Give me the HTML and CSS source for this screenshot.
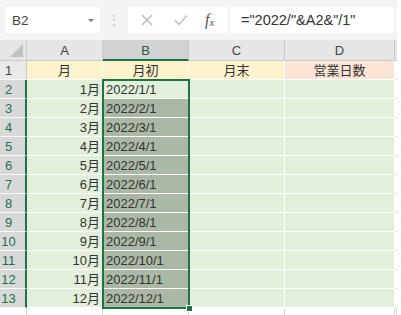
FILE: index.html
```html
<!DOCTYPE html>
<html lang="ja">
<head>
    <meta charset="UTF-8">
    <title>Sheet</title>
    <link rel="stylesheet" href="styles.css">
</head>
<body>
    <div class="excel">
        <div class="bar">
            <div class="name-box"><span>B2</span><span class="caret"></span></div>
            <div class="grip">⋮</div>
            <div class="fx-box">
                <svg class="btn-x" width="12" height="12" viewBox="0 0 12 12"><path d="M1 1L11 11M11 1L1 11" stroke="#b4b4b4" stroke-width="1.2" fill="none"/></svg>
                <svg class="btn-ok" width="14" height="12" viewBox="0 0 14 12"><path d="M1 6.5L5 10.5L13 1.5" stroke="#b4b4b4" stroke-width="1.2" fill="none"/></svg>
                <span class="fx">f<sub>x</sub></span>
            </div>
            <div class="formula">="2022/"&amp;A2&amp;"/1"</div>
        </div>

        <div class="sheet">
            <div class="grid">
                <div class="corner"><span class="tri"></span></div>
                <div class="ch">A</div>
                <div class="ch on">B</div>
                <div class="ch">C</div>
                <div class="ch">D</div>
                <div class="ch edge"></div>

                <div class="rh">1</div>
                <div class="c yel mid">月</div>
                <div class="c yel mid">月初</div>
                <div class="c yel mid">月末</div>
                <div class="c org mid">営業日数</div>
                <div class="e"></div>

                <div class="rh on">2</div><div class="c num">1月</div><div class="c">2022/1/1</div><div class="c"></div><div class="c"></div><div class="e"></div>
                <div class="rh on">3</div><div class="c num">2月</div><div class="c sel">2022/2/1</div><div class="c"></div><div class="c"></div><div class="e"></div>
                <div class="rh on">4</div><div class="c num">3月</div><div class="c sel">2022/3/1</div><div class="c"></div><div class="c"></div><div class="e"></div>
                <div class="rh on">5</div><div class="c num">4月</div><div class="c sel">2022/4/1</div><div class="c"></div><div class="c"></div><div class="e"></div>
                <div class="rh on">6</div><div class="c num">5月</div><div class="c sel">2022/5/1</div><div class="c"></div><div class="c"></div><div class="e"></div>
                <div class="rh on">7</div><div class="c num">6月</div><div class="c sel">2022/6/1</div><div class="c"></div><div class="c"></div><div class="e"></div>
                <div class="rh on">8</div><div class="c num">7月</div><div class="c sel">2022/7/1</div><div class="c"></div><div class="c"></div><div class="e"></div>
                <div class="rh on">9</div><div class="c num">8月</div><div class="c sel">2022/8/1</div><div class="c"></div><div class="c"></div><div class="e"></div>
                <div class="rh on">10</div><div class="c num">9月</div><div class="c sel">2022/9/1</div><div class="c"></div><div class="c"></div><div class="e"></div>
                <div class="rh on">11</div><div class="c num">10月</div><div class="c sel">2022/10/1</div><div class="c"></div><div class="c"></div><div class="e"></div>
                <div class="rh on">12</div><div class="c num">11月</div><div class="c sel">2022/11/1</div><div class="c"></div><div class="c"></div><div class="e"></div>
                <div class="rh on">13</div><div class="c num">12月</div><div class="c sel">2022/12/1</div><div class="c"></div><div class="c"></div><div class="e"></div>

                <div class="tail"></div><div class="tail"></div><div class="tail"></div><div class="tail"></div><div class="tail"></div><div class="tail"></div>
            </div>
            <!-- selection B2:B13 -->
            <div class="range"><span class="handle"></span></div>
        </div>
    </div>
</body>
</html>
```

FILE: styles.css
```css
*{
    margin: 0;
    padding: 0;
    box-sizing: border-box;
}
body{
    background: #fff;
    font-family: "Liberation Sans", "Noto Sans CJK JP", sans-serif;
    color: #333;
}
.excel{
    width: 397px;
}
.bar{
    height: 40px;
    background: #f3f3f3;
    display: flex;
    align-items: flex-start;
    padding: 7px 3px 0 5px;
}
.name-box{
    width: 95px;
    height: 26px;
    background: #fff;
    display: flex;
    align-items: center;
    justify-content: space-between;
    padding: 0 6px 0 7px;
    font-size: 13.5px;
    color: #444;
}
.caret{
    width: 0;
    height: 0;
    border-left: 3px solid transparent;
    border-right: 3px solid transparent;
    border-top: 3px solid #777;
}
.grip{
    width: 28px;
    height: 26px;
    line-height: 26px;
    text-align: center;
    color: #c8c8c8;
    font-size: 14px;
}
.fx-box{
    width: 99px;
    height: 26px;
    background: #fff;
    display: flex;
    align-items: center;
}
.btn-x{
    margin-left: 13px;
}
.btn-ok{
    margin-left: 21px;
}
.fx{
    margin-left: 17px;
    font-family: "Liberation Serif", serif;
    font-style: italic;
    font-size: 16px;
    color: #555;
}
.fx sub{
    font-size: 11px;
    vertical-align: -1px;
}
.formula{
    margin-left: 3px;
    flex: 1;
    height: 26px;
    background: #fff;
    font-size: 14.5px;
    line-height: 26px;
    padding-left: 11px;
    color: #333;
}
.sheet{
    position: relative;
}
.grid{
    display: grid;
    grid-template-columns: 27px 76px 86px 96px 110px 2px;
    grid-template-rows: 21px 19px repeat(12, 19px) 7px;
    font-size: 13px;
}
.corner{
    background: #e6e6e6;
    border-right: 1px solid #c9c9c9;
    border-bottom: 1px solid #c9c9c9;
    position: relative;
}
.tri{
    position: absolute;
    right: 3px;
    bottom: 3px;
    width: 0;
    height: 0;
    border-left: 13px solid transparent;
    border-bottom: 13px solid #c1c1c1;
}
.ch{
    background: #e6e6e6;
    border-right: 1px solid #c9c9c9;
    border-bottom: 1px solid #c9c9c9;
    text-align: center;
    line-height: 21px;
    color: #444;
}
.ch.on{
    background: #d2d2d2;
    border-bottom: 2px solid #217346;
    color: #2b5b3e;
}
.ch.edge{
    border-right: none;
}
.rh{
    background: #e9e9e9;
    border-right: 1px solid #c9c9c9;
    border-bottom: 1px solid #f8f8f8;
    line-height: 19px;
    text-align: center;
    padding-right: 9px;
    color: #444;
}
.rh.on{
    background: #d8d8d8;
    border-right: 2px solid #217346;
    color: #217346;
    padding-right: 8px;
}
.c{
    background: #e2efda;
    border-right: 1px solid #fff;
    border-bottom: 1px solid #fff;
    line-height: 19px;
    padding: 0 3px;
    white-space: nowrap;
}
.c.yel{
    background: #fff2cc;
}
.c.org{
    background: #fce4d6;
}
.mid{
    text-align: center;
}
.num{
    text-align: right;
    padding-right: 2px;
}
.sel{
    background: #abb8a6;
}
.e{
    border-bottom: 1px solid #d9d9d9;
}
.tail{
    border-right: 1px solid #d9d9d9;
}
.range{
    position: absolute;
    left: 102px;
    top: 39px;
    width: 88px;
    height: 230px;
    border: 2px solid #217346;
}
.handle{
    position: absolute;
    right: -5px;
    bottom: -5px;
    width: 7px;
    height: 7px;
    background: #217346;
    border: 1px solid #fff;
}
```
